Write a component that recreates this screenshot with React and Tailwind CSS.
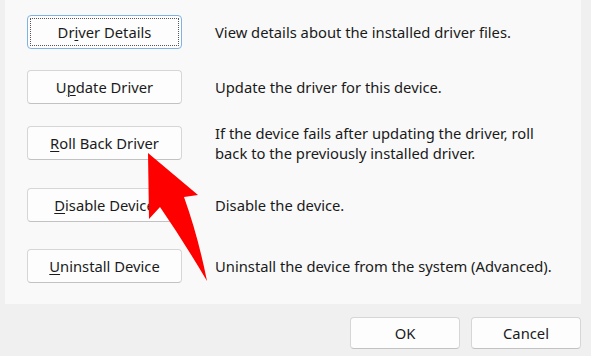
import React from 'react';

const font = { fontFamily: '"Noto Sans", "Open Sans", sans-serif' };

function Label({ text, keyIndex }) {
    return (
        <span>
            {text.slice(0, keyIndex)}
            <span className="underline underline-offset-2 decoration-1">{text[keyIndex]}</span>
            {text.slice(keyIndex + 1)}
        </span>
    );
}

function DlgButton({ children, focused = false }) {
    if (focused) {
        return (
            <div className="flex h-[34px] w-[155px] shrink-0 items-stretch rounded-[4px] border border-[#7fb2e5] bg-[#fdfdfd] p-[2px]">
                <div className="flex flex-1 items-center justify-center border border-dotted border-[#555] text-[14.75px] text-[#1b1b1b]">
                    {children}
                </div>
            </div>
        );
    }
    return (
        <div className="flex h-[34px] w-[155px] shrink-0 items-center justify-center rounded-[4px] border border-[#d6d6d6] border-b-[#c2c2c2] bg-[#fdfdfd] text-[14.75px] text-[#1b1b1b]">
            {children}
        </div>
    );
}

const rows = [
    { label: 'Driver Details', key: 2, desc: 'View details about the installed driver files.', mt: 'mt-0', focused: true },
    { label: 'Update Driver', key: 1, desc: 'Update the driver for this device.', mt: 'mt-[21px]' },
    { label: 'Roll Back Driver', key: 0, desc: 'If the device fails after updating the driver, roll back to the previously installed driver.', mt: 'mt-[22px]', narrow: true },
    { label: 'Disable Device', key: 0, desc: 'Disable the device.', mt: 'mt-[28px]' },
    { label: 'Uninstall Device', key: 0, desc: 'Uninstall the device from the system (Advanced).', mt: 'mt-[27px]' },
];

export default function App() {
    return (
        <div className="relative flex h-[356px] w-[591px] flex-col overflow-hidden bg-[#f0f0f0] pl-[5px] pr-[10px]" style={font}>
            <div className="flex h-[304px] w-[576px] flex-col bg-[#f9f9f9] pl-[22px] pt-[15px]">
                {rows.map((r) => (
                    <div key={r.label} className={`flex h-[34px] items-center ${r.mt}`}>
                        <DlgButton focused={r.focused}>
                            <Label text={r.label} keyIndex={r.key} />
                        </DlgButton>
                        <p className={`ml-[33px] ${r.narrow ? 'w-[322px]' : 'w-[360px]'} text-[14.75px] leading-[20px] text-[#1a1a1a]`}>{r.desc}</p>
                    </div>
                ))}
            </div>
            <div className="mt-[13px] flex justify-end gap-[11px]">
                <div className="flex h-[32px] w-[110px] items-center justify-center rounded-[4px] border border-[#d6d6d6] border-b-[#c2c2c2] bg-[#fdfdfd] text-[14.75px] text-[#1b1b1b]">OK</div>
                <div className="flex h-[32px] w-[110px] items-center justify-center rounded-[4px] border border-[#d6d6d6] border-b-[#c2c2c2] bg-[#fdfdfd] text-[14.75px] text-[#1b1b1b]">Cancel</div>
            </div>
            <svg className="absolute left-0 top-0" width="591" height="356" viewBox="0 0 591 356">
                <path
                    d="M148 153 L198 195 L184 197 Q198 236 207 281 Q184 242 160 207 L149 219 Z"
                    fill="#ff0000"
                />
            </svg>
        </div>
    );
}
